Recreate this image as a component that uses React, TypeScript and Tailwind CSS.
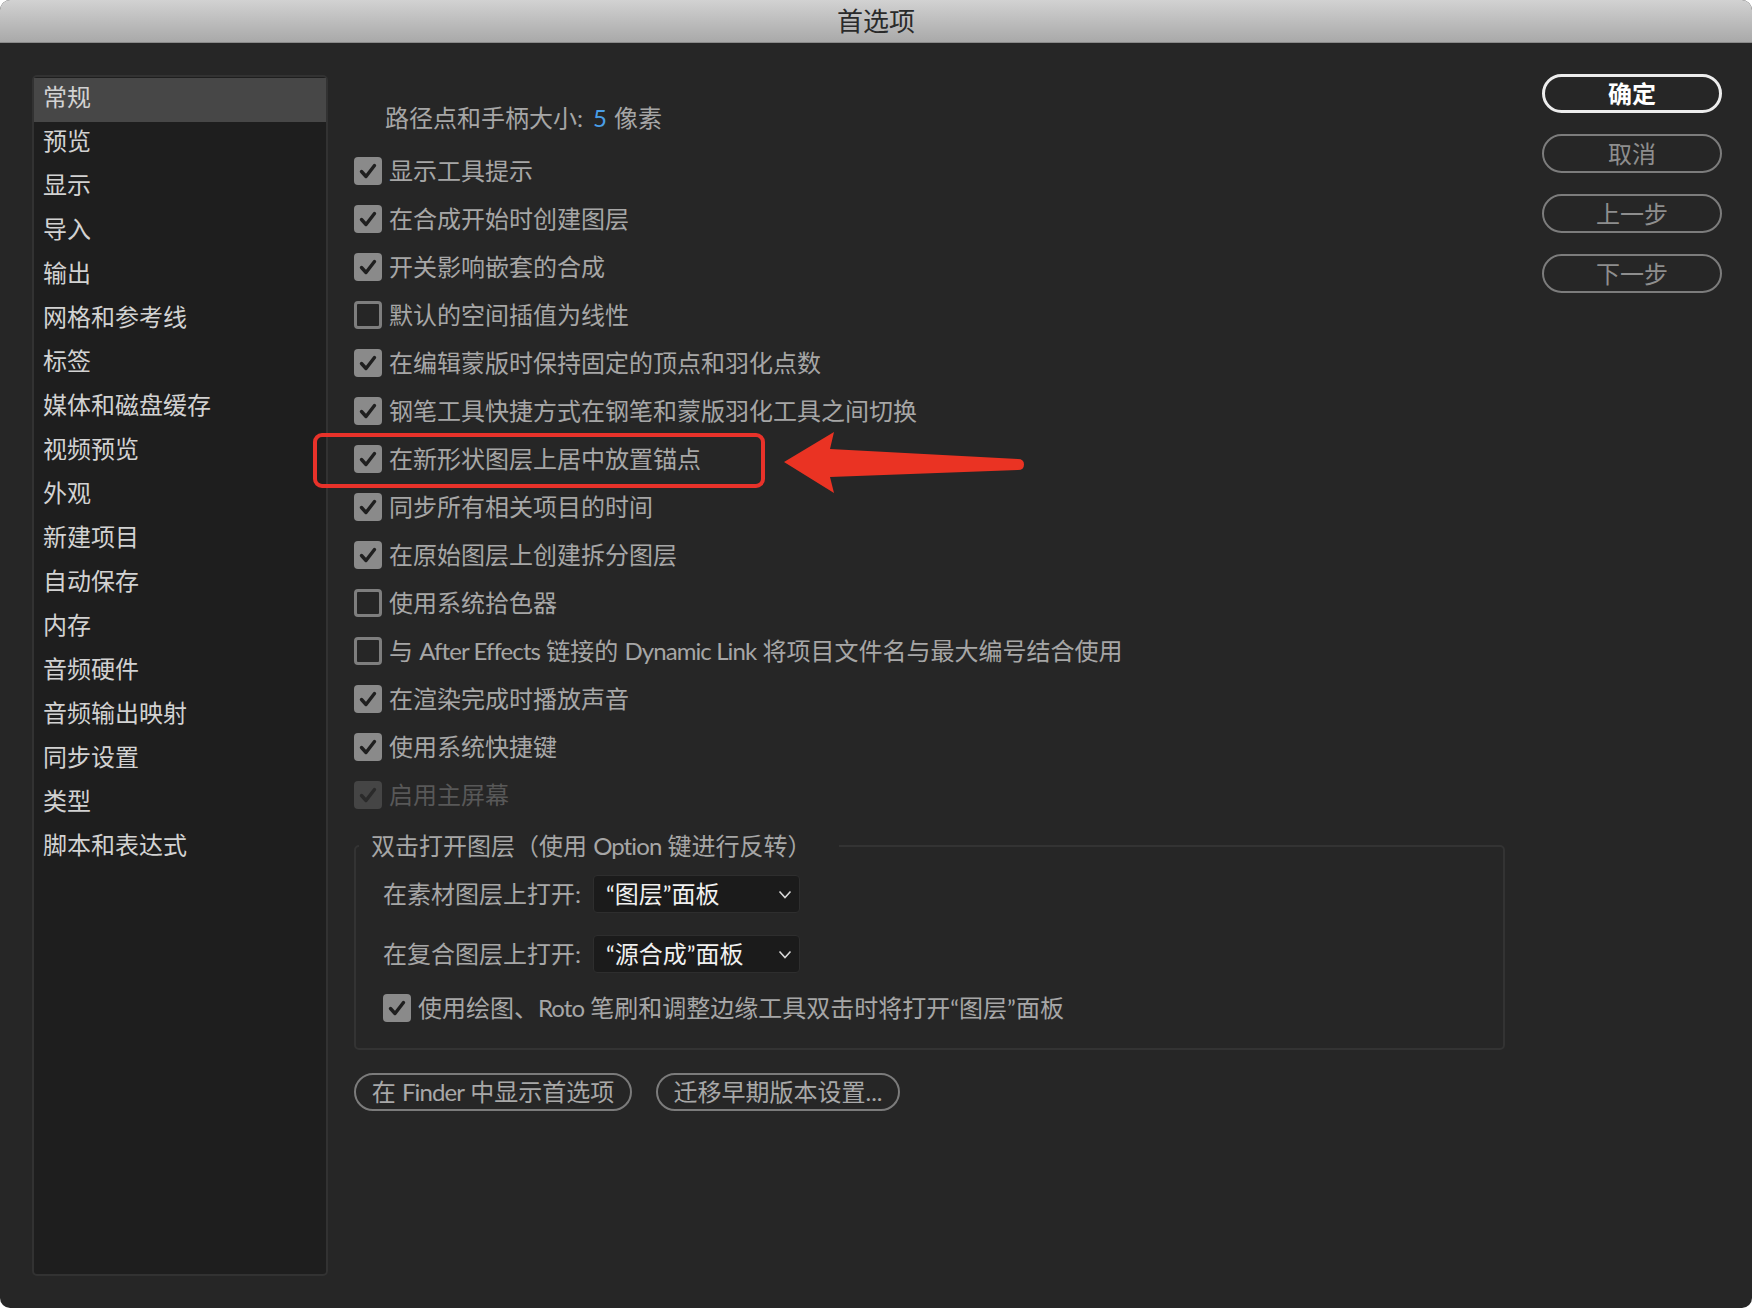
import React from "react";

const sections = [
  "常规",
  "预览",
  "显示",
  "导入",
  "输出",
  "网格和参考线",
  "标签",
  "媒体和磁盘缓存",
  "视频预览",
  "外观",
  "新建项目",
  "自动保存",
  "内存",
  "音频硬件",
  "音频输出映射",
  "同步设置",
  "类型",
  "脚本和表达式",
];

const options: { label: React.ReactNode; checked: boolean; disabled?: boolean }[] = [
  { label: "显示工具提示", checked: true },
  { label: "在合成开始时创建图层", checked: true },
  { label: "开关影响嵌套的合成", checked: true },
  { label: "默认的空间插值为线性", checked: false },
  { label: "在编辑蒙版时保持固定的顶点和羽化点数", checked: true },
  { label: "钢笔工具快捷方式在钢笔和蒙版羽化工具之间切换", checked: true },
  { label: "在新形状图层上居中放置锚点", checked: true },
  { label: "同步所有相关项目的时间", checked: true },
  { label: "在原始图层上创建拆分图层", checked: true },
  { label: "使用系统拾色器", checked: false },
  {
    label: (
      <>
        与 <Latin>After Effects</Latin> 链接的 <Latin>Dynamic Link</Latin> 将项目文件名与最大编号结合使用
      </>
    ),
    checked: false,
  },
  { label: "在渲染完成时播放声音", checked: true },
  { label: "使用系统快捷键", checked: true },
  { label: "启用主屏幕", checked: true, disabled: true },
];

function Latin({ children }: { children: React.ReactNode }) {
  return <span className="tracking-[-0.9px]">{children}</span>;
}

function CheckBox({ checked, disabled }: { checked: boolean; disabled?: boolean }) {
  if (!checked) {
    return <div className="h-[28px] w-[28px] shrink-0 rounded-[4px] border-[3px] border-[#7e7e7e]" />;
  }
  return (
    <div
      className={`flex h-[28px] w-[28px] shrink-0 items-center justify-center rounded-[4px] ${
        disabled ? "bg-[#454545]" : "bg-[#8a8a8a]"
      }`}
    >
      <svg width="20" height="20" viewBox="0 0 20 20">
        <path
          d="M3.5 10.5 L8 15.5 L16.5 4.5"
          fill="none"
          stroke={disabled ? "#2a2a2a" : "#1f1f1f"}
          strokeWidth="3.4"
          strokeLinecap="round"
          strokeLinejoin="round"
        />
      </svg>
    </div>
  );
}

function Select({ value }: { value: string }) {
  return (
    <div className="flex h-[38px] w-[207px] items-center justify-between rounded-[4px] border border-[#2e2e2e] bg-[#1b1b1b] pl-[12px] pr-[7px] text-[24px] leading-none text-[#f0f0f0]">
      <span>{value}</span>
      <svg width="14" height="9" viewBox="0 0 14 9">
        <path d="M1.5 1.5 L7 7.5 L12.5 1.5" fill="none" stroke="#d8d8d8" strokeWidth="1.6" />
      </svg>
    </div>
  );
}

export default function App() {
  return (
    <div className="h-[1308px] w-[1752px] bg-white font-['Lato','Noto_Sans_CJK_SC',sans-serif]">
      <div className="relative flex h-full flex-col overflow-hidden rounded-[10px] bg-[#262626]">
        {/* title bar */}
        <div className="flex h-[43px] shrink-0 items-center justify-center border-b border-[#8a8a8a] bg-gradient-to-b from-[#d2d2d2] to-[#a9a9a9] text-[26px] leading-none text-[#2a2a2a]">
          首选项
        </div>

        <div className="flex flex-1 px-[32px] pb-[32px] pt-[32px]">
          {/* sidebar */}
          <div className="w-[296px] shrink-0 rounded-[5px] border-2 border-[#323232] bg-[#1e1e1e] pt-[1px]">
            {sections.map((s, i) => (
              <div
                key={s}
                className={`flex h-[44px] items-center pb-[6px] pl-[9px] text-[24px] leading-none text-[#d2d2d2] ${
                  i === 0 ? "bg-[#474747]" : ""
                }`}
              >
                {s}
              </div>
            ))}
          </div>

          {/* main */}
          <div className="ml-[26px] flex-1 pt-[19px]">
            <div className="flex h-[48px] items-center pl-[31px] text-[24px] leading-none text-[#a6a6a6]">
              路径点和手柄大小:
              <span className="ml-[10px] text-[#4a9fe8]">5</span>
              <span className="ml-[7px]">像素</span>
            </div>

            <div className="mt-[5px]">
              {options.map((o, i) => (
                <div key={i} className="flex h-[48px] items-center gap-[7px]">
                  <CheckBox checked={o.checked} disabled={o.disabled} />
                  <span
                    className={`text-[24px] leading-none ${o.disabled ? "text-[#585858]" : "text-[#a6a6a6]"}`}
                  >
                    {o.label}
                  </span>
                </div>
              ))}
            </div>

            <fieldset className="mt-[11px] rounded-[5px] border-2 border-[#333333] pb-[16px]">
              <legend className="ml-[3px] pl-[12px] pr-[27px] text-[24px] leading-[32px] text-[#a6a6a6]">
                双击打开图层（使用 <Latin>Option</Latin> 键进行反转）
              </legend>
              <div className="px-[27px]">
                <div className="mt-[13px] flex h-[38px] items-center">
                  <span className="w-[210px] text-[24px] leading-none text-[#a6a6a6]">在素材图层上打开:</span>
                  <Select value="“图层”面板" />
                </div>
                <div className="mt-[22px] flex h-[38px] items-center">
                  <span className="w-[210px] text-[24px] leading-none text-[#a6a6a6]">在复合图层上打开:</span>
                  <Select value="“源合成”面板" />
                </div>
                <div className="mt-[11px] flex h-[48px] items-center gap-[7px]">
                  <CheckBox checked />
                  <span className="text-[24px] leading-none text-[#a6a6a6]">
                    使用绘图、<Latin>Roto</Latin> 笔刷和调整边缘工具双击时将打开“图层”面板
                  </span>
                </div>
              </div>
            </fieldset>

            <div className="mt-[23px] flex gap-[24px]">
              <button className="flex h-[38px] w-[278px] items-center justify-center rounded-full border-[2.5px] border-[#7b7b7b] text-[24px] leading-none text-[#a8a8a8]">
                <span>
                  在 <Latin>Finder</Latin> 中显示首选项
                </span>
              </button>
              <button className="flex h-[38px] w-[244px] items-center justify-center rounded-full border-[2.5px] border-[#7b7b7b] text-[24px] leading-none text-[#a8a8a8]">
                迁移早期版本设置...
              </button>
            </div>
          </div>

          {/* dialog buttons */}
          <div className="-mt-[1px] ml-[37px] mr-[-2px] flex w-[180px] shrink-0 flex-col gap-[21px]">
            <button className="flex h-[39px] items-center justify-center rounded-full border-[3px] border-[#ededed] text-[24px] font-bold leading-none text-white">
              确定
            </button>
            {["取消", "上一步", "下一步"].map((b) => (
              <button
                key={b}
                className="flex h-[39px] items-center justify-center rounded-full border-[2.5px] border-[#7c7c7c] text-[24px] leading-none text-[#8e8e8e]"
              >
                {b}
              </button>
            ))}
          </div>
        </div>

        {/* annotation */}
        <div className="pointer-events-none absolute left-[313px] top-[433px] h-[55px] w-[452px] rounded-[9px] border-[4px] border-[#e8322a]" />
        <svg className="pointer-events-none absolute left-0 top-0" width="1752" height="1308">
          <path
            d="M784 462 L834 432 L830 449 L1018 459 Q1024 459 1024 464.5 Q1024 470 1018 470 L830 477 L834 493 Z"
            fill="#ea3323"
          />
        </svg>
      </div>
    </div>
  );
}
